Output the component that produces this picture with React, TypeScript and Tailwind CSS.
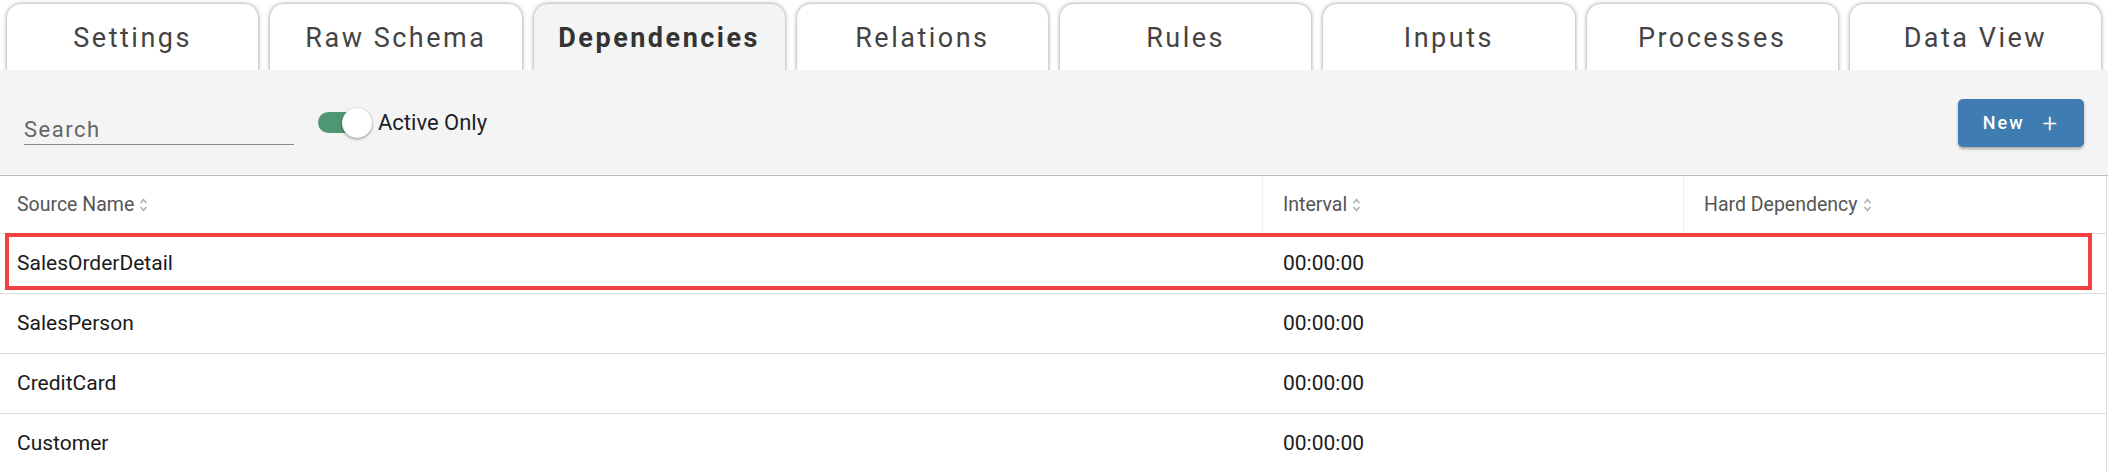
import { useState } from "react";

const tabs = [
  "Settings",
  "Raw Schema",
  "Dependencies",
  "Relations",
  "Rules",
  "Inputs",
  "Processes",
  "Data View",
];

const rows = [
  { name: "SalesOrderDetail", interval: "00:00:00", hard: "" },
  { name: "SalesPerson", interval: "00:00:00", hard: "" },
  { name: "CreditCard", interval: "00:00:00", hard: "" },
  { name: "Customer", interval: "00:00:00", hard: "" },
];

const SortIcon = () => (
  <svg width="9" height="16" viewBox="0 0 9 16" className="ml-[5px]" fill="none">
    <path d="M1.5 6 L4.5 2.5 L7.5 6" stroke="#a8a8a8" strokeWidth="1.3" />
    <path d="M1.5 10 L4.5 13.5 L7.5 10" stroke="#a8a8a8" strokeWidth="1.3" />
  </svg>
);

const App = () => {
  const [activeOnly, setActiveOnly] = useState(true);
  const active = "Dependencies";

  return (
    <div className="w-[2108px] h-[472px] overflow-hidden bg-white font-['Roboto',sans-serif]">
      {/* Tabs */}
      <div className="flex gap-[12px] px-[7px] pt-[4px] h-[70px] overflow-hidden">
        {tabs.map((t) => (
          <div
            key={t}
            className={
              "flex-1 h-[80px] rounded-t-[14px] shadow-[0_0_4px_rgba(0,0,0,0.45)] flex justify-center pt-[17px] text-[27px] tracking-[2.5px] leading-[34px] " +
              (t === active
                ? "bg-[#f4f4f4] font-bold text-[#333]"
                : "bg-white text-[#444]")
            }
          >
            {t}
          </div>
        ))}
      </div>

      {/* Toolbar */}
      <div className="h-[106px] bg-[#f4f4f4] border-b border-[#bbbbbb] flex items-center pl-[24px] pr-[24px]">
        <div className="w-[270px] pt-[16px]">
          <div className="border-b border-[#888] text-[22px] leading-[28px] tracking-[1.5px] text-[#666]">
            Search
          </div>
        </div>

        <div
          className="ml-[24px] flex items-center cursor-pointer"
          onClick={() => setActiveOnly(!activeOnly)}
        >
          <div className="relative w-[54px] h-[30px] flex items-center">
            <div className="w-[44px] h-[21px] rounded-full bg-[#4f9672]" />
            <div className="absolute right-0 top-0 w-[30px] h-[30px] rounded-full bg-white shadow-[0_1px_3px_rgba(0,0,0,0.45)]" />
          </div>
          <span className="ml-[6px] text-[22px] text-[#1e1e28]">Active Only</span>
        </div>

        <button className="ml-auto w-[126px] h-[48px] rounded-[5px] bg-[#3e7cb1] text-white text-[18px] font-medium tracking-[2px] flex items-center justify-center gap-[18px] shadow-[0_2px_3px_rgba(0,0,0,0.3)]">
          <span>New</span>
          <span className="text-[26px] font-light leading-none">+</span>
        </button>
      </div>

      {/* Table */}
      <div className="border-r border-[#dddddd] w-[2107px]">
        <div className="flex h-[58px] border-b border-[#dddddd] text-[19.5px] text-[#555]">
          <div className="w-[1263px] border-r border-[#eeeeee] flex items-center pl-[17px]">
            Source Name
            <SortIcon />
          </div>
          <div className="w-[421px] border-r border-[#eeeeee] flex items-center pl-[20px]">
            Interval
            <SortIcon />
          </div>
          <div className="flex-1 flex items-center pl-[20px]">
            Hard Dependency
            <SortIcon />
          </div>
        </div>

        {rows.map((r, i) => (
          <div
            key={r.name}
            className="relative flex h-[60px] border-b border-[#dddddd] text-[21px] text-[#1a1a1a]"
          >
            <div className="w-[1263px] flex items-center pl-[17px]">{r.name}</div>
            <div className="w-[421px] flex items-center pl-[20px]">{r.interval}</div>
            <div className="flex-1 flex items-center pl-[20px]">{r.hard}</div>
            {i === 0 && (
              <div className="absolute left-[5px] right-[14px] top-[-1px] bottom-[3px] border-4 border-[#f24141] pointer-events-none" />
            )}
          </div>
        ))}
      </div>
    </div>
  );
};

export default App;
